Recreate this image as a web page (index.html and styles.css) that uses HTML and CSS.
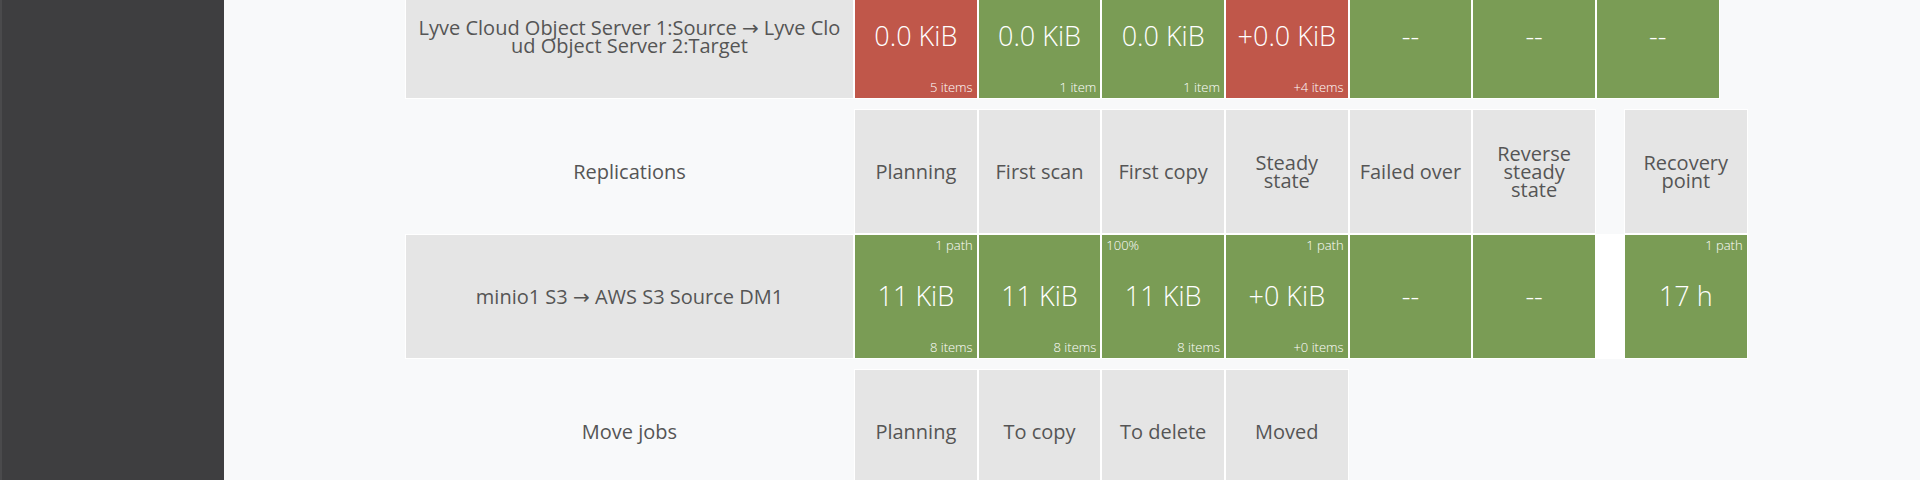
FILE: index.html
```html
<!DOCTYPE html>
<html lang="en">
<head>
<meta charset="utf-8">
<title>Replication status</title>
<link rel="stylesheet" href="styles.css">
</head>
<body>
<div class="app">
  <aside class="sidebar"></aside>
  <main class="content">
    <div class="board">
      <div class="row">
        <div class="cell label">Lyve Cloud Object Server 1:Source → Lyve Cloud Object Server 2:Target</div>
        <div class="cell stat red"><span class="tr"></span><span class="val">0.0 KiB</span><span class="br">5 items</span></div>
        <div class="cell stat green"><span class="tr"></span><span class="val">0.0 KiB</span><span class="br">1 item</span></div>
        <div class="cell stat green"><span class="tr"></span><span class="val">0.0 KiB</span><span class="br">1 item</span></div>
        <div class="cell stat red"><span class="tr"></span><span class="val">+0.0 KiB</span><span class="br">+4 items</span></div>
        <div class="cell stat green"><span class="tr"></span><span class="val">--</span><span class="br"></span></div>
        <div class="cell stat green"><span class="tr"></span><span class="val">--</span><span class="br"></span></div>
        <div class="cell stat green"><span class="tr"></span><span class="val">--</span><span class="br"></span></div>
      </div>

      <div class="row section">
        <div class="cell label plain">Replications</div>
        <div class="cell head">Planning</div>
        <div class="cell head">First scan</div>
        <div class="cell head">First copy</div>
        <div class="cell head">Steady state</div>
        <div class="cell head">Failed over</div>
        <div class="cell head">Reverse steady state</div>
        <div class="spacer"></div>
        <div class="cell head">Recovery point</div>
      </div>
      <div class="row">
        <div class="cell label">minio1 S3 → AWS S3 Source DM1</div>
        <div class="cell stat green"><span class="tr">1 path</span><span class="val">11 KiB</span><span class="br">8 items</span></div>
        <div class="cell stat green"><span class="tr"></span><span class="val">11 KiB</span><span class="br">8 items</span></div>
        <div class="cell stat green"><span class="tl">100%</span><span class="val">11 KiB</span><span class="br">8 items</span></div>
        <div class="cell stat green"><span class="tr">1 path</span><span class="val">+0 KiB</span><span class="br">+0 items</span></div>
        <div class="cell stat green"><span class="tr"></span><span class="val">--</span><span class="br"></span></div>
        <div class="cell stat green"><span class="tr"></span><span class="val">--</span><span class="br"></span></div>
        <div class="spacer white"></div>
        <div class="cell stat green"><span class="tr">1 path</span><span class="val">17 h</span><span class="br"></span></div>
      </div>

      <div class="row section">
        <div class="cell label plain">Move jobs</div>
        <div class="cell head">Planning</div>
        <div class="cell head">To copy</div>
        <div class="cell head">To delete</div>
        <div class="cell head">Moved</div>
      </div>
    </div>
  </main>
</div>
</body>
</html>
```

FILE: styles.css
```css
* { box-sizing: border-box; }

html, body {
  margin: 0;
  padding: 0;
  height: 100%;
  overflow: hidden;
}

body {
  font-family: "Open Sans", "Noto Sans", "DejaVu Sans", sans-serif;
  background: #f8f9fa;
  color: #555;
}

.app {
  display: flex;
  height: 480px;
}

.sidebar {
  width: 224px;
  flex: 0 0 224px;
  background: #3e3e40;
  border-left: 2px solid #4a4a4c;
}

.content {
  flex: 1;
  padding-left: 181px;
}

.board {
  margin-top: -26px;
  display: flex;
  flex-direction: column;
}

.row {
  display: flex;
}

.row.section {
  margin-top: 10px;
}

.cell {
  height: 125px;
  border: 1px solid #fff;
  font-size: 20px;
  line-height: 18px;
}

.label {
  width: 449px;
  flex: 0 0 449px;
  background: #e5e5e5;
  display: flex;
  align-items: center;
  justify-content: center;
  text-align: center;
  padding: 0 9px;
  word-break: break-all;
}

.label.plain {
  background: transparent;
  border-color: transparent;
}

.head, .stat {
  width: 123.67px;
  flex: 0 0 123.67px;
}

.head {
  background: #e5e5e5;
  display: flex;
  align-items: center;
  justify-content: center;
  text-align: center;
  padding: 0 6px;
}

.stat {
  color: #fff;
  display: grid;
  grid-template-rows: minmax(0, 1fr) auto minmax(0, 1fr);
  padding: 2px 4px 3px;
  font-weight: 300;
}

.stat.red { background: #c0574a; }
.stat.green { background: #7a9c55; }

.tr, .tl, .br {
  font-size: 13px;
  line-height: 16px;
}

.tr { text-align: right; align-self: start; }
.tl { text-align: left; align-self: start; }
.br { text-align: right; align-self: end; }

.val {
  text-align: center;
  font-size: 27px;
  line-height: 32px;
}

.spacer {
  width: 28px;
  flex: 0 0 28px;
  height: 125px;
}

.spacer.white {
  background: #fff;
}
```
